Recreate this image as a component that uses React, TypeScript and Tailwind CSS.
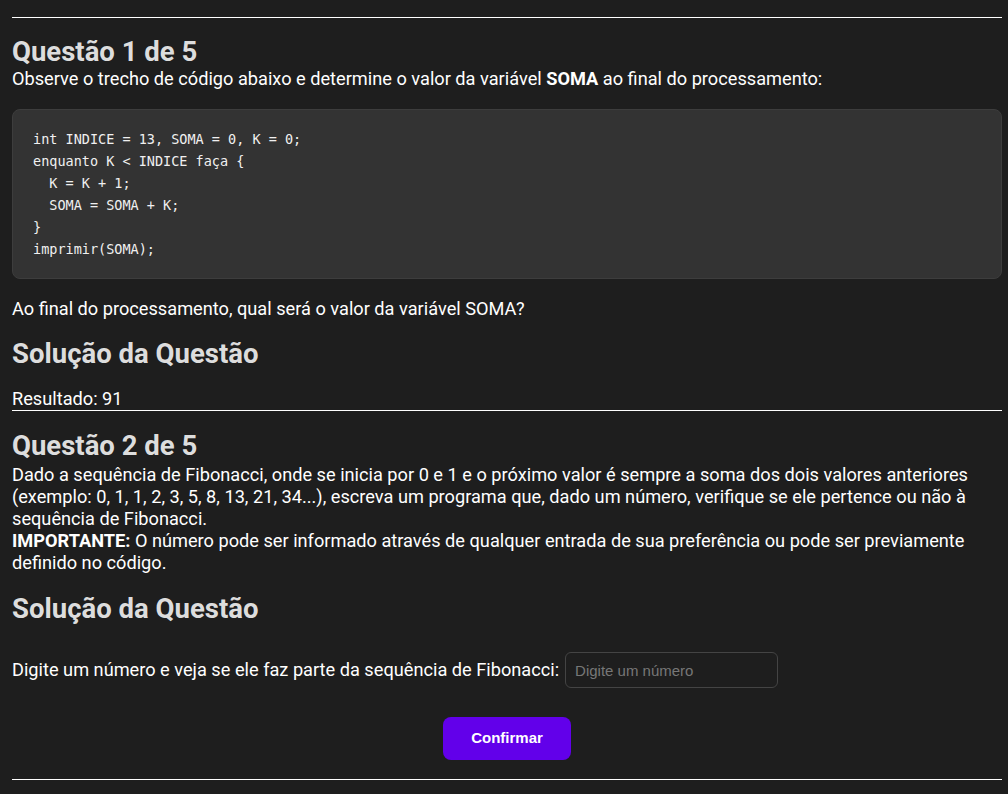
import React from "react";

const codeLines = [
  "int INDICE = 13, SOMA = 0, K = 0;",
  "enquanto K < INDICE faça {",
  "  K = K + 1;",
  "  SOMA = SOMA + K;",
  "}",
  "imprimir(SOMA);",
];

export default function App() {
  return (
    <div
      className="min-h-[794px] bg-[#1e1e1e] text-white pl-3 pr-[6px] pt-[17px] pb-4"
      style={{ fontFamily: "Roboto, 'Noto Sans', sans-serif" }}
    >
      <div className="border-t border-white" />
      <h2 className="mt-[19px] text-[27.5px] leading-[30px] font-bold text-[#dddddd]">Questão 1 de 5</h2>
      <p className="text-[18.2px] leading-[22px] mt-px">
        Observe o trecho de código abaixo e determine o valor da variável <strong>SOMA</strong> ao final do processamento:
      </p>
      <pre
        className="mt-[19px] bg-[#333333] border border-[#3d3d3d] rounded-lg px-5 py-[18px] text-[13.5px] leading-[22px] text-[#f0f0f0]"
        style={{ fontFamily: "'DejaVu Sans Mono', 'Liberation Mono', monospace" }}
      >
        {codeLines.join("\n")}
      </pre>
      <p className="mt-[19px] text-[18.2px] leading-[22px]">Ao final do processamento, qual será o valor da variável SOMA?</p>
      <h2 className="mt-[19px] text-[27.5px] leading-[30px] font-bold text-[#dddddd]">Solução da Questão</h2>
      <p className="mt-[19px] text-[18.2px] leading-[22px]">Resultado: 91</p>
      <div className="border-t border-white" />
      <h2 className="mt-[20px] text-[27.5px] leading-[30px] font-bold text-[#dddddd]">Questão 2 de 5</h2>
      <p className="text-[18.2px] leading-[22px] mt-[3px]">
        Dado a sequência de Fibonacci, onde se inicia por 0 e 1 e o próximo valor é sempre a soma dos dois valores anteriores (exemplo: 0, 1, 1, 2, 3, 5, 8, 13, 21, 34...), escreva um programa que, dado um número, verifique se ele pertence ou não à sequência de Fibonacci.
        <br />
        <strong>IMPORTANTE:</strong> O número pode ser informado através de qualquer entrada de sua preferência ou pode ser previamente definido no código.
      </p>
      <h2 className="mt-[20px] text-[27.5px] leading-[30px] font-bold text-[#dddddd]">Solução da Questão</h2>
      <div className="mt-[28px] flex items-center gap-[6px]">
        <label className="text-[18.2px] leading-[22px]">Digite um número e veja se ele faz parte da sequência de Fibonacci:</label>
        <input
          type="text"
          placeholder="Digite um número"
          className="w-[213px] h-[36px] rounded-md border border-[#444444] bg-[#1e1e1e] px-[9px] text-[15px] text-white placeholder:text-[#777777] outline-none"
          style={{ fontFamily: "'Liberation Sans', Arial, sans-serif" }}
        />
      </div>
      <div className="mt-[29px] flex justify-center">
        <button
          className="w-[128px] h-[43px] rounded-lg bg-[#6200ea] text-white text-[15px] font-bold"
          style={{ fontFamily: "'Liberation Sans', Arial, sans-serif" }}
        >
          Confirmar
        </button>
      </div>
      <div className="mt-[19px] border-t border-white" />
    </div>
  );
}
